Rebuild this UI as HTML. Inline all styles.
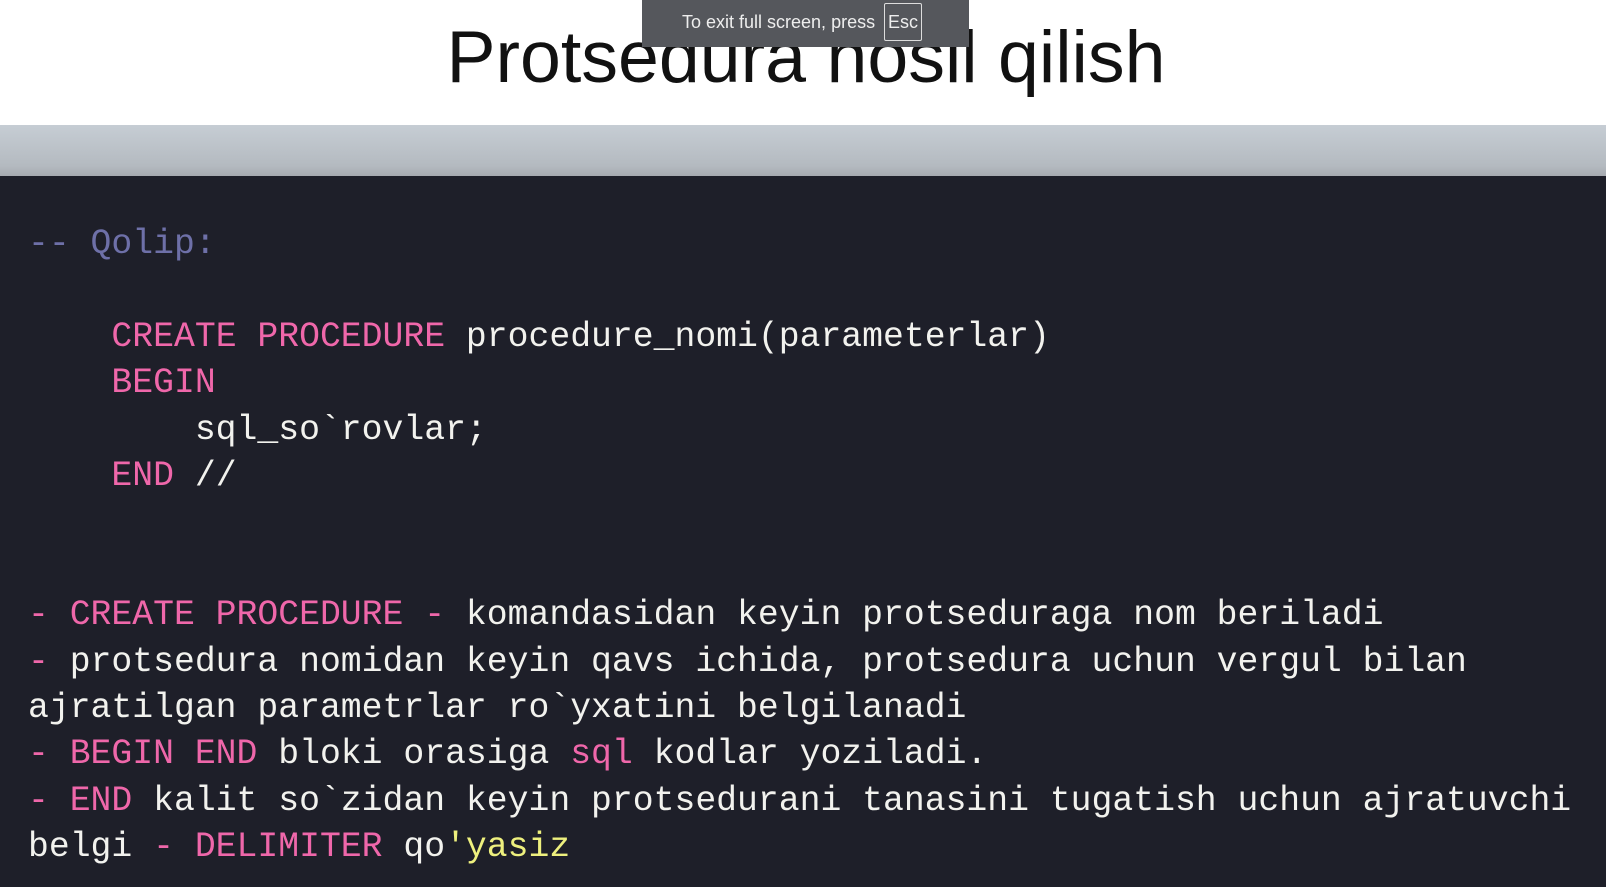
<!DOCTYPE html>
<html><head><meta charset="utf-8"><style>
html,body{margin:0;padding:0;width:1606px;height:887px;overflow:hidden;background:#fff;}
.title{position:absolute;top:14px;left:0;width:1612px;text-align:center;font:73.5px "Liberation Sans",sans-serif;color:#111;}
.band{position:absolute;top:125px;left:0;width:1606px;height:51px;background:linear-gradient(#c6cdd4,#b4bac0 80%,#a6aab0);}
.code{position:absolute;top:176px;left:0;width:1606px;height:711px;background:#1e1f29;}
pre{position:absolute;top:222px;left:28px;margin:0;font:34.75px/46.4px "Liberation Mono",monospace;color:#f2f2ee;}
.p{color:#ef67aa}.c{color:#6e70a8}.y{color:#eef07e}
.fs{position:absolute;top:0;left:642px;width:327px;height:47px;background:#55575c;color:#eee;font:18px "Liberation Sans",sans-serif;}
.fs span{position:absolute;left:40px;top:12px;}
.fs b{position:absolute;left:242px;top:3px;width:36px;height:36px;border:1px solid #ddd;border-radius:2px;font-weight:normal;text-align:center;line-height:36px;}
</style></head><body>
<div class="title">Protsedura hosil qilish</div>
<div class="band"></div>
<div class="code"></div>
<pre><span class="c">-- Qolip:</span>

    <span class="p">CREATE PROCEDURE</span> procedure_nomi(parameterlar)
    <span class="p">BEGIN</span>
        sql_so`rovlar;
    <span class="p">END</span> //


<span class="p">- CREATE PROCEDURE -</span> komandasidan keyin protseduraga nom beriladi
<span class="p">-</span> protsedura nomidan keyin qavs ichida, protsedura uchun vergul bilan
ajratilgan parametrlar ro`yxatini belgilanadi
<span class="p">- BEGIN END</span> bloki orasiga <span class="p">sql</span> kodlar yoziladi.
<span class="p">- END</span> kalit so`zidan keyin protsedurani tanasini tugatish uchun ajratuvchi
belgi <span class="p">- DELIMITER</span> qo<span class="y">'yasiz</span></pre>
<div class="fs"><span>To exit full screen, press</span><b>Esc</b></div>
</body></html>
